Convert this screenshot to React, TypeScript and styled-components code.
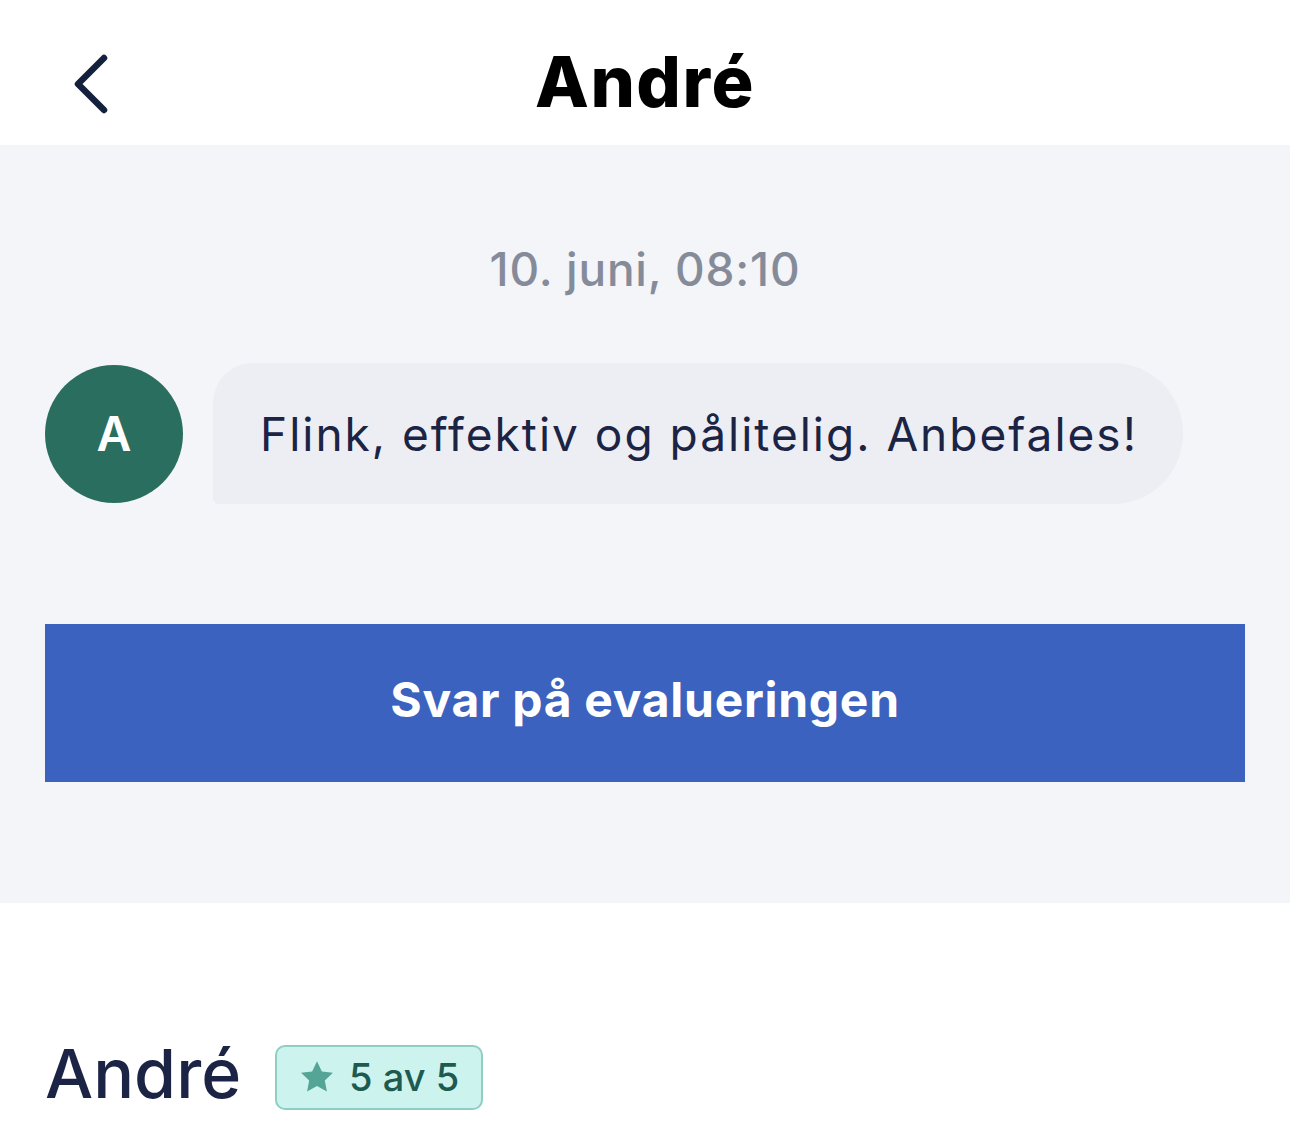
import React from 'react';
import styled, { createGlobalStyle } from 'styled-components';

const GlobalStyle = createGlobalStyle`
  html, body {
    margin: 0;
    padding: 0;
    background: #ffffff;
    font-family: 'Inter', 'Noto Sans', sans-serif;
  }
`;

const Page = styled.div`
  width: 1290px;
  min-height: 1127px;
  background: #ffffff;
`;

const Header = styled.header`
  position: relative;
  height: 145px;
  display: flex;
  align-items: center;
  justify-content: center;
`;

const BackButton = styled.button`
  position: absolute;
  left: 60px;
  top: 44px;
  width: 60px;
  height: 80px;
  background: none;
  border: none;
  padding: 0;
  cursor: pointer;
  display: flex;
  align-items: center;
  justify-content: center;
`;

const Title = styled.h1`
  margin: 0;
  font-size: 70px;
  font-weight: 800;
  color: #000000;
  letter-spacing: 1.5px;
  padding-top: 18px;
`;

const Thread = styled.section`
  background: #f3f5f8;
  padding: 96px 45px 121px;
  display: flex;
  flex-direction: column;
`;

const Timestamp = styled.div`
  text-align: center;
  font-size: 46px;
  font-weight: 500;
  color: #868b9a;
  line-height: 56px;
  letter-spacing: 0.8px;
`;

const MessageRow = styled.div`
  display: flex;
  align-items: center;
  gap: 30px;
  margin-top: 66px;
`;

const Avatar = styled.div<{ color: string }>`
  width: 138px;
  height: 138px;
  border-radius: 50%;
  background: ${p => p.color};
  color: #ffffff;
  font-size: 48px;
  font-weight: 600;
  display: flex;
  align-items: center;
  justify-content: center;
  flex-shrink: 0;
`;

const Bubble = styled.div`
  background: #eceef3;
  border-radius: 40px 70px 70px 6px;
  height: 141px;
  padding: 0 45px 0 47px;
  display: flex;
  align-items: center;
  font-size: 46px;
  font-weight: 400;
  letter-spacing: 2px;
  color: #1b2444;
`;

const PrimaryButton = styled.button`
  margin-top: 120px;
  height: 158px;
  padding: 0 0 8px;
  border: none;
  background: #3b62be;
  color: #ffffff;
  font-family: inherit;
  font-size: 48px;
  font-weight: 700;
  letter-spacing: 0.7px;
  cursor: pointer;
`;

const Review = styled.section`
  padding: 130px 45px 0;
  display: flex;
  align-items: center;
  gap: 34px;
`;

const ReviewerName = styled.h2`
  margin: 0;
  font-size: 68px;
  font-weight: 500;
  line-height: 80px;
  color: #1b2444;
`;

const RatingBadge = styled.div`
  display: flex;
  align-items: center;
  gap: 14px;
  height: 61px;
  margin-top: 8px;
  padding: 0 22px 0 22px;
  background: #cdf3ef;
  border: 2px solid #8fcfc3;
  border-radius: 10px;
  font-size: 38px;
  font-weight: 500;
  color: #1d5a4f;
`;

const ChevronLeft = () => (
  <svg width="44" height="64" viewBox="0 0 44 64" fill="none">
    <path d="M36 6 L10 32 L36 58" stroke="#14213d" strokeWidth="6.5" strokeLinecap="round" strokeLinejoin="round" />
  </svg>
);

const Star = () => (
  <svg width="36" height="34" viewBox="0 0 24 23">
    <path d="M12 0.8l3.3 6.9 7.5 0.9-5.5 5.2 1.4 7.5L12 17.6l-6.7 3.7 1.4-7.5L1.2 8.6l7.5-0.9z" fill="#55a597" />
  </svg>
);

const App: React.FC = () => {
  return (
    <Page>
      <GlobalStyle />
      <Header>
        <BackButton aria-label="Tilbake">
          <ChevronLeft />
        </BackButton>
        <Title>André</Title>
      </Header>

      <Thread>
        <Timestamp>10. juni, 08:10</Timestamp>
        <MessageRow>
          <Avatar color="#2a6e60">A</Avatar>
          <Bubble>Flink, effektiv og pålitelig. Anbefales!</Bubble>
        </MessageRow>
        <PrimaryButton>Svar på evalueringen</PrimaryButton>
      </Thread>

      <Review>
        <ReviewerName>André</ReviewerName>
        <RatingBadge>
          <Star />
          5 av 5
        </RatingBadge>
      </Review>
    </Page>
  );
};

export default App;
